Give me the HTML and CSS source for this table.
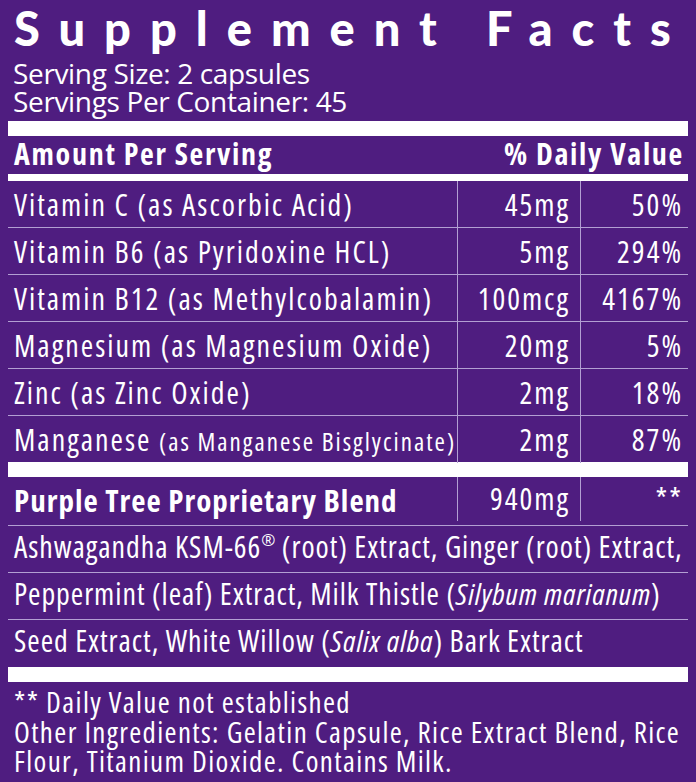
FILE: index.html
```html
<!DOCTYPE html>
<html>
<head>
<meta charset="utf-8">
<link rel="stylesheet" href="styles.css">
</head>
<body>
<div class="label">
  <h1 class="title">Supplement Facts</h1>
  <div class="serving">Serving Size: 2 capsules<br>Servings Per Container: 45</div>
  <div class="bar thick"></div>
  <div class="head-row"><span>Amount Per Serving</span><span>% Daily Value</span></div>
  <div class="bar thin"></div>
  <div class="grid">
    <div class="row"><div class="c1">Vitamin C (as Ascorbic Acid)</div><div class="c2">45mg</div><div class="c3">50%</div></div>
    <div class="row"><div class="c1">Vitamin B6 (as Pyridoxine HCL)</div><div class="c2">5mg</div><div class="c3">294%</div></div>
    <div class="row"><div class="c1">Vitamin B12 (as Methylcobalamin)</div><div class="c2">100mcg</div><div class="c3">4167%</div></div>
    <div class="row"><div class="c1">Magnesium (as Magnesium Oxide)</div><div class="c2">20mg</div><div class="c3">5%</div></div>
    <div class="row"><div class="c1">Zinc (as Zinc Oxide)</div><div class="c2">2mg</div><div class="c3">18%</div></div>
    <div class="row"><div class="c1">Manganese <span class="small">(as Manganese Bisglycinate)</span></div><div class="c2">2mg</div><div class="c3">87%</div></div>
  </div>
  <div class="bar thick"></div>
  <div class="blend">
    <div class="c1 bold">Purple Tree Proprietary Blend</div><div class="c2">940mg</div><div class="c3">**</div>
  </div>
  <div class="ing">Ashwagandha KSM-66<sup>®</sup> (root) Extract, Ginger (root) Extract,</div>
  <div class="ing">Peppermint (leaf) Extract, Milk Thistle (<i>Silybum marianum</i>)</div>
  <div class="ing last">Seed Extract, White Willow (<i>Salix alba</i>) Bark Extract</div>
  <div class="bar thick"></div>
  <div class="foot">** Daily Value not established<br>Other Ingredients: Gelatin Capsule, Rice Extract Blend, Rice<br>Flour, Titanium Dioxide. Contains Milk.</div>
</div>
</body>
</html>
```

FILE: styles.css
```css
html, body {
  margin: 0;
  background: #4f1d80;
}
body {
  color: #ffffff;
  font-family: "Open Sans", sans-serif;
  font-stretch: 75%;
}
.label {
  width: 680px;
  padding: 0 8px;
}
.title {
  margin: 0 0 8px 0;
  padding: 5px 0 0 6px;
  font-family: Lato, "Open Sans", sans-serif;
  font-stretch: 100%;
  font-weight: 900;
  font-size: 47px;
  line-height: 46px;
  letter-spacing: 19px;
  white-space: nowrap;
}
.serving {
  font-size: 28px;
  font-stretch: 100%;
  letter-spacing: -0.35px;
  line-height: 28px;
  padding-left: 5px;
}
.bar {
  background: #ffffff;
}
.bar.thick {
  height: 15px;
  margin-top: 6px;
}
.bar.thin {
  height: 7px;
}
.head-row {
  display: flex;
  justify-content: space-between;
  font-weight: bold;
  font-size: 30px;
  letter-spacing: 1.7px;
  line-height: 35px;
  height: 38px;
  padding: 0 4px 0 6px;
}
.grid {
  display: flex;
  flex-direction: column;
}
.row, .blend {
  display: grid;
  grid-template-columns: 449px 123px 108px;
  font-size: 30px;
  letter-spacing: 2px;
  height: 46px;
}
.row + .row {
  border-top: 1px solid #b39fd3;
}
.row > div {
  padding-top: 2px;
  line-height: 44px;
  white-space: nowrap;
}
.c1 {
  padding-left: 6px;
}
.c2 {
  border-left: 1px solid #b39fd3;
  text-align: right;
  padding-right: 10px;
}
.c3 {
  border-left: 1px solid #b39fd3;
  text-align: right;
  padding-right: 5px;
}
.small {
  font-size: 25px;
  letter-spacing: 2px;
}
.grid + .bar.thick {
  margin-top: 0;
}
.blend {
  height: 48px;
  border-bottom: 1px solid #b39fd3;
}
.blend > div {
  padding-top: 2px;
  line-height: 40px;
  white-space: nowrap;
  margin-bottom: 6px;
}
.blend > .bold {
  font-weight: bold;
  font-size: 31px;
  letter-spacing: 1px;
  line-height: 42px;
}
.ing {
  font-size: 30px;
  letter-spacing: 0.95px;
  height: 46px;
  line-height: 41px;
  padding-left: 6px;
  white-space: nowrap;
}
.ing + .ing {
  border-top: 1px solid #b39fd3;
}
.ing.last {
  height: 47px;
}
.ing + .bar.thick {
  margin-top: 0;
}
sup {
  font-size: 17px;
  letter-spacing: 0;
  line-height: 0;
  vertical-align: 12px;
}
.foot {
  font-size: 29px;
  letter-spacing: 1.35px;
  line-height: 29.5px;
  padding: 5px 0 0 6px;
}
```
